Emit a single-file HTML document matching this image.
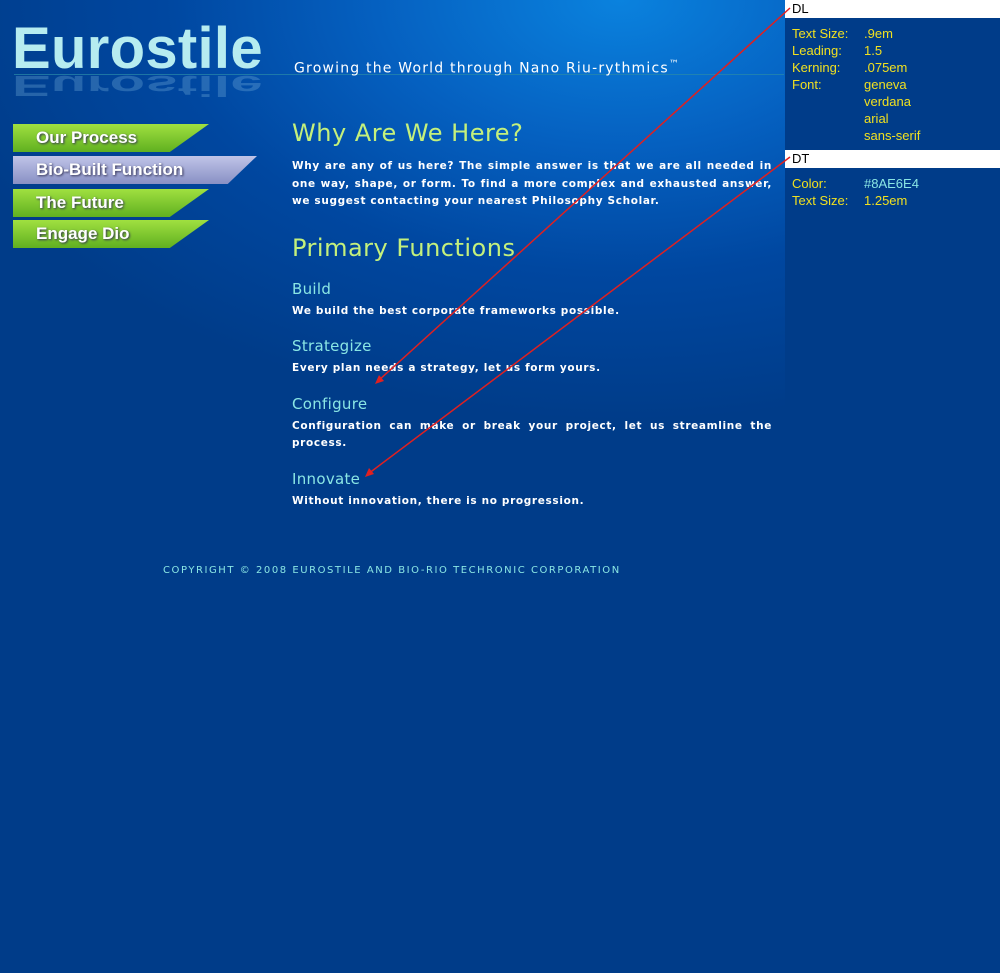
<!DOCTYPE html>
<html><head><style>
html,body{margin:0;padding:0}
body{width:1000px;height:973px;background:#003c89;position:relative;overflow:hidden;font-family:"DejaVu Sans","Liberation Sans",sans-serif;}
#hdr{position:absolute;left:0;top:0;width:785px;height:540px;background:radial-gradient(ellipse 700px 420px at 620px 0px,#0a82de 0%,#0560c0 35%,#0047a0 65%,#003c89 100%);}
.logo{position:absolute;left:12px;top:20px;font-family:"Liberation Sans",sans-serif;font-weight:bold;font-size:58px;letter-spacing:0.3px;color:#b6ecf0;line-height:1;}
.refl{position:absolute;left:12px;top:22px;font-family:"Liberation Sans",sans-serif;font-weight:bold;font-size:58px;letter-spacing:0.3px;color:#7fb8e0;opacity:.3;transform:scaleY(-0.5);transform-origin:0 52px;line-height:1;}
.tag{position:absolute;left:294px;top:59px;color:#fff;font-size:14px;letter-spacing:1.2px}
.tag sup{font-size:10px}
.hline{position:absolute;left:14px;top:74px;width:770px;height:1px;background:#2a8aa8;opacity:.7}
.nav{position:absolute;left:13px;width:196px;height:28px;background:linear-gradient(#a0e040,#60b020);clip-path:polygon(0 0,100% 0,80% 100%,0 100%);color:#fff;font-family:"Liberation Sans",sans-serif;font-weight:bold;font-size:17px;line-height:28px;text-indent:23px;text-shadow:1px 1px 2px #335;}
.nav.b{width:244px;background:linear-gradient(#c0c4e8,#8890c4);clip-path:polygon(0 0,100% 0,88% 100%,0 100%)}
#main{position:absolute;left:292px;top:118px;width:480px;color:#fff;}
h1{font-weight:normal;color:#c4f07c;font-size:24px;margin:0;letter-spacing:.5px}
p,dd{font-size:10.5px;line-height:17.5px;letter-spacing:.65px;margin:0;text-align:justify;font-weight:bold}
dl{margin:0}dd{margin:0}
dt{color:#8ae6e4;font-size:15px;letter-spacing:.3px}
.foot{position:absolute;left:163px;top:565px;color:#8ae6e4;font-size:10px;letter-spacing:1.55px}
.side{position:absolute;left:785px;width:215px;background:#003c89;color:#f0e020;font-family:"Liberation Sans",sans-serif;font-size:13px}
.side .t{background:#fff;color:#000;height:18px;line-height:18px;padding-left:7px;font-size:13px}
.row{position:absolute;left:7px}
</style></head><body>
<div id="hdr"></div>
<div class="refl">Eurostile</div>
<div class="logo">Eurostile</div>
<div class="hline"></div>
<div class="tag">Growing the World through Nano Riu-rythmics<sup>™</sup></div>
<div class="nav" style="top:124px">Our Process</div>
<div class="nav b" style="top:156px">Bio-Built Function</div>
<div class="nav" style="top:189px">The Future</div>
<div class="nav" style="top:220px">Engage Dio</div>
<div id="main">
<h1 style="margin-top:1px">Why Are We Here?</h1>
<p style="margin-top:11px">Why are any of us here? The simple answer is that we are all needed in one way, shape, or form. To find a more complex and exhausted answer, we suggest contacting your nearest Philosophy Scholar.</p>
<h1 style="margin-top:23px">Primary Functions</h1>
<dl>
<dt style="margin-top:18px">Build</dt><dd style="margin-top:5px">We build the best corporate frameworks possible.</dd>
<dt style="margin-top:17px">Strategize</dt><dd style="margin-top:5px">Every plan needs a strategy, let us form yours.</dd>
<dt style="margin-top:17px">Configure</dt><dd style="margin-top:5px">Configuration can make or break your project, let us streamline the process.</dd>
<dt style="margin-top:17px">Innovate</dt><dd style="margin-top:5px">Without innovation, there is no progression.</dd>
</dl>
</div>
<div class="foot">COPYRIGHT © 2008 EUROSTILE AND BIO-RIO TECHRONIC CORPORATION</div>
<div class="side" style="top:0;height:150px">
<div class="t">DL</div>
<div class="row" style="top:25px;line-height:17px">Text Size:<br>Leading:<br>Kerning:<br>Font:</div>
<div class="row" style="left:79px;top:25px;line-height:17px">.9em<br>1.5<br>.075em<br>geneva<br>verdana<br>arial<br>sans-serif</div>
</div>
<div class="side" style="top:150px;height:60px">
<div class="t">DT</div>
<div class="row" style="top:25px;line-height:17px">Color:<br>Text Size:</div>
<div class="row" style="left:79px;top:25px;line-height:17px"><span style="color:#8ae6e4">#8AE6E4</span><br>1.25em</div>
</div>
<svg style="position:absolute;left:0;top:0" width="1000" height="973">
<line x1="790" y1="8" x2="378" y2="381" stroke="#e02020" stroke-width="1.5"/>
<polygon points="375,384 379,375 384,381" fill="#e02020"/>
<line x1="790" y1="157" x2="368" y2="474" stroke="#e02020" stroke-width="1.5"/>
<polygon points="365,477 369,468 374,474" fill="#e02020"/>
</svg>
</body></html>
